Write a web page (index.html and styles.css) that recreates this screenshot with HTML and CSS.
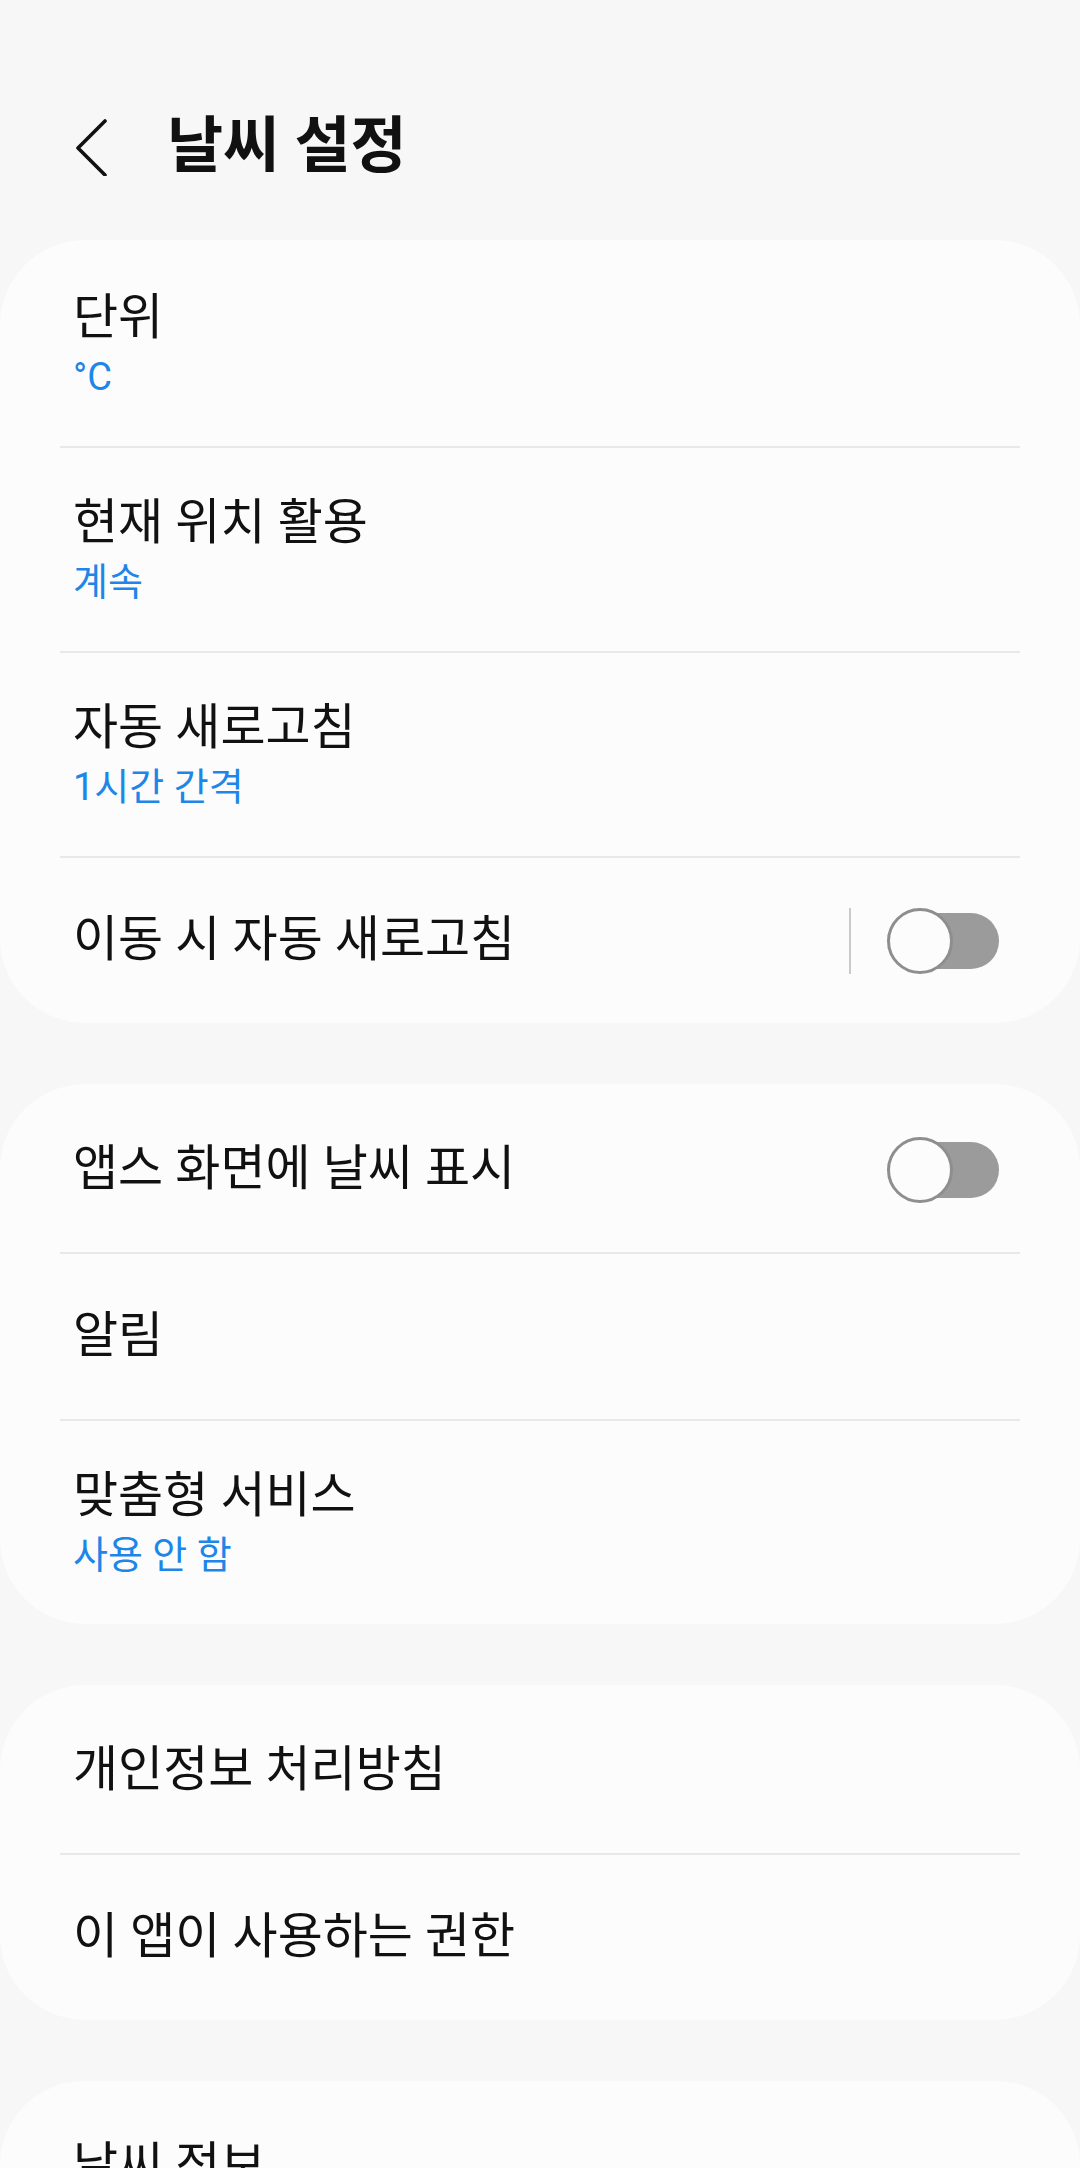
FILE: index.html
```html
<!DOCTYPE html>
<html lang="ko">
<head>
    <meta charset="UTF-8">
    <meta name="viewport" content="width=device-width, initial-scale=1.0">
    <title>날씨 설정</title>
    <link rel="stylesheet" href="styles.css">
</head>
<body>

    <div class="header">
        <button class="back" aria-label="뒤로">
            <svg width="40" height="60" viewBox="0 0 40 60">
                <path d="M31 5 L4 32 L31 59" fill="none" stroke="#111" stroke-width="3.6" stroke-linecap="round" stroke-linejoin="round"/>
            </svg>
        </button>
        <h1>날씨 설정</h1>
    </div>

    <div class="card">
        <div class="row double">
            <div class="text">
                <div class="title">단위</div>
                <div class="sub">°C</div>
            </div>
        </div>
        <div class="divider"></div>
        <div class="row double">
            <div class="text">
                <div class="title">현재 위치 활용</div>
                <div class="sub">계속</div>
            </div>
        </div>
        <div class="divider"></div>
        <div class="row double">
            <div class="text">
                <div class="title">자동 새로고침</div>
                <div class="sub">1시간 간격</div>
            </div>
        </div>
        <div class="divider"></div>
        <div class="row">
            <div class="text">
                <div class="title">이동 시 자동 새로고침</div>
            </div>
            <div class="sep"></div>
            <div class="switch"><span class="knob"></span></div>
        </div>
    </div>

    <div class="card">
        <div class="row">
            <div class="text">
                <div class="title">앱스 화면에 날씨 표시</div>
            </div>
            <div class="switch"><span class="knob"></span></div>
        </div>
        <div class="divider"></div>
        <div class="row">
            <div class="text">
                <div class="title">알림</div>
            </div>
        </div>
        <div class="divider"></div>
        <div class="row double">
            <div class="text">
                <div class="title">맞춤형 서비스</div>
                <div class="sub">사용 안 함</div>
            </div>
        </div>
    </div>

    <div class="card">
        <div class="row">
            <div class="text">
                <div class="title">개인정보 처리방침</div>
            </div>
        </div>
        <div class="divider"></div>
        <div class="row">
            <div class="text">
                <div class="title">이 앱이 사용하는 권한</div>
            </div>
        </div>
    </div>

    <div class="card">
        <div class="row">
            <div class="text">
                <div class="title">날씨 정보</div>
            </div>
        </div>
    </div>

</body>
</html>
```

FILE: styles.css
```css
body {
    margin: 0;
    background: #f7f7f7;
    font-family: Roboto, "Noto Sans CJK KR", sans-serif;
    color: #111;
    overflow: hidden;
}
.header {
    height: 188px;
    padding-top: 52px;
    display: flex;
    align-items: center;
}
.back {
    width: 40px;
    height: 60px;
    margin-left: 74px;
    padding: 0;
    border: none;
    background: none;
    display: flex;
}
.header h1 {
    margin: 0 0 0 53px;
    font-size: 61px;
    font-weight: 700;
    line-height: 1;
}
.card {
    background: #fcfcfc;
    border-radius: 85px;
    padding-top: 3px;
    margin-bottom: 61px;
}
.row {
    height: 165px;
    display: flex;
    align-items: center;
    padding: 0 81px 0 73px;
}
.row.double {
    height: 203px;
}
.text {
    flex: 1;
}
.title {
    font-size: 49px;
    line-height: 1.2;
}
.sub {
    font-size: 38px;
    line-height: 1.2;
    margin-top: 7px;
    color: #1d86e8;
}
.divider {
    height: 2px;
    margin: 0 60px;
    background: #e8e8e8;
}
.sep {
    width: 2px;
    height: 66px;
    background: #cacaca;
    margin-right: 36px;
}
.switch {
    position: relative;
    width: 112px;
    height: 66px;
}
.switch::before {
    content: "";
    position: absolute;
    right: 0;
    top: 5px;
    width: 100px;
    height: 56px;
    border-radius: 28px;
    background: #9b9b9b;
}
.knob {
    position: absolute;
    left: 0;
    top: 0;
    width: 60px;
    height: 60px;
    border: 3px solid #8e8e8e;
    border-radius: 50%;
    background: #fcfcfc;
}
```
